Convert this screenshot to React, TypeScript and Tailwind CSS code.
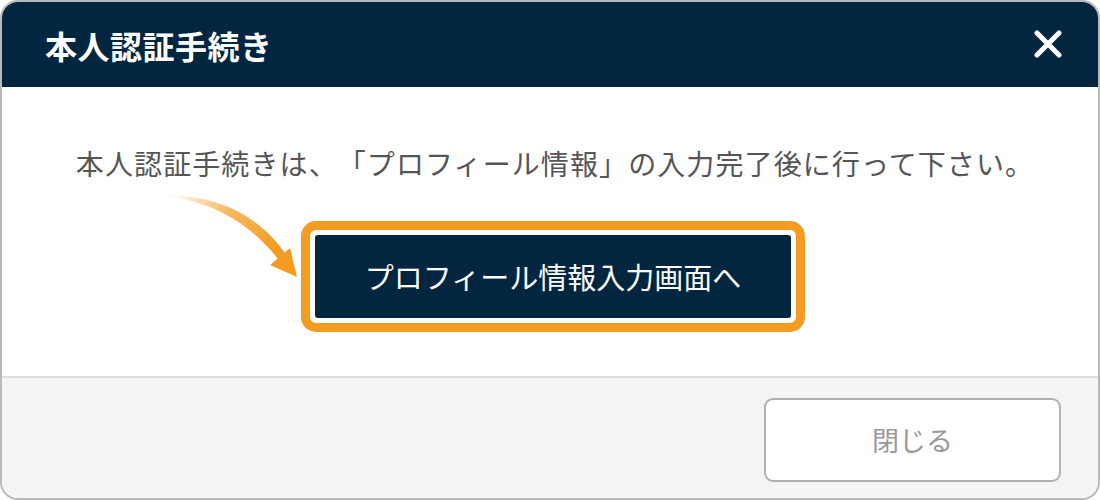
import React from 'react'

const jp = { fontFamily: '"Noto Sans CJK JP", "Noto Sans", sans-serif' }

function CurvedArrow() {
  return (
    <svg
      className="absolute left-[160px] top-[100px]"
      width="150"
      height="100"
      viewBox="0 0 150 100"
    >
      <defs>
        <linearGradient id="arrowFade" x1="0" y1="0" x2="1" y2="0.7">
          <stop offset="0" stopColor="#f39c21" stopOpacity="0" />
          <stop offset="0.45" stopColor="#f39c21" stopOpacity="0.7" />
          <stop offset="1" stopColor="#f39c21" stopOpacity="1" />
        </linearGradient>
      </defs>
      {/* shaft, widening toward the head */}
      <path
        d="M4 9 C 50 7, 95 26, 123 66 L 116 72 C 90 38, 52 15, 4 9 Z"
        fill="url(#arrowFade)"
      />
      {/* head */}
      <path d="M135 90 L108 78 L128 61 Z" fill="#f39c21" />
    </svg>
  )
}

export default function App() {
  return (
    <div
      className="w-[1100px] h-[500px] border-2 border-[#b9b9b9] rounded-[18px] overflow-hidden flex flex-col bg-white [text-spacing-trim:space-all]"
      style={jp}
    >
      {/* Header */}
      <div className="h-[85px] shrink-0 bg-[#02263f] flex items-center justify-between pl-[43px] pr-[36px]">
        <h1 className="text-[32px] tracking-[0.5px] font-bold text-white leading-none">本人認証手続き</h1>
        <svg width="28" height="28" viewBox="0 0 28 28" className="mt-[-2px]">
          <path d="M3 3 L25 25 M25 3 L3 25" stroke="white" strokeWidth="5" strokeLinecap="round" />
        </svg>
      </div>

      {/* Body */}
      <div className="relative flex-1 flex flex-col items-center pt-[56px]">
        <p className="text-[28px] tracking-[1.1px] leading-[40px] text-[#555555] pl-[10px]">
          本人認証手続きは、「プロフィール情報」の入力完了後に行って下さい。
        </p>
        <div className="mt-[38px] ml-[6px] border-[9px] border-[#f39c21] rounded-[15px] p-[5px] bg-white">
          <button className="w-[476px] h-[83px] bg-[#02263f] rounded-[3px] text-white text-[29px] leading-none">
            プロフィール情報入力画面へ
          </button>
        </div>
        <CurvedArrow />
      </div>

      {/* Footer */}
      <div className="h-[122px] shrink-0 bg-[#f4f4f4] border-t-2 border-[#dddddd] flex justify-end items-start pt-[20px] pr-[37px]">
        <button className="w-[297px] h-[84px] bg-white border-2 border-[#b0b0b0] rounded-[9px] text-[27px] text-[#999999]">
          閉じる
        </button>
      </div>
    </div>
  )
}
